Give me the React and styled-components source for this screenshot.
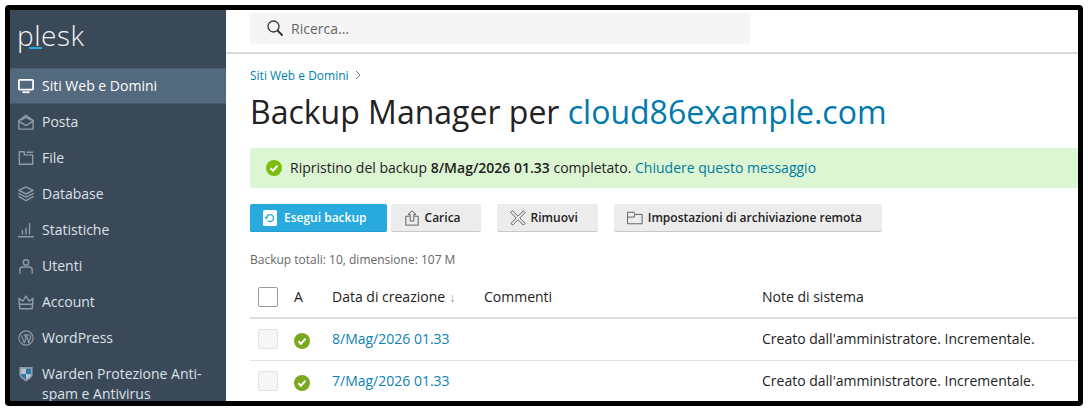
import React from 'react';
import styled, { createGlobalStyle } from 'styled-components';

const GlobalStyle = createGlobalStyle`
  html, body { margin: 0; padding: 0; background: #fff; }
  body { font-family: "Open Sans", "Liberation Sans", sans-serif; }
  * { box-sizing: border-box; }
`;

const Icon = ({ children, size = 18, color = 'currentColor', width = 1.6 }) => (
  <svg width={size} height={size} viewBox="0 0 18 18" fill="none" stroke={color} strokeWidth={width} strokeLinecap="round" strokeLinejoin="round">
    {children}
  </svg>
);

const navItems = [
  {
    label: 'Siti Web e Domini',
    active: true,
    icon: (
      <svg width="18" height="18" viewBox="0 0 18 18" fill="#fff">
        <path d="M2 1h14a2 2 0 0 1 2 2v9a2 2 0 0 1-2 2H2a2 2 0 0 1-2-2V3a2 2 0 0 1 2-2zM2 3v9h14V3z" fillRule="evenodd" />
        <rect x="5" y="15" width="8" height="2" />
      </svg>
    ),
  },
  {
    label: 'Posta',
    icon: (
      <Icon>
        <path d="M1 7.500 9 1.500l8 6V17H1z" />
        <path d="M1 8l8 5 8-5M4 6.500 9 3.500l5 3" />
      </Icon>
    ),
  },
  {
    label: 'File',
    icon: (
      <Icon>
        <path d="M1.500 2h5.500v3.500h9.500V16h-15z" />
        <path d="M10 2.500h6.500" />
      </Icon>
    ),
  },
  {
    label: 'Database',
    icon: (
      <Icon>
        <path d="M9 1 17 5l-8 4-8-4z" />
        <path d="M1 8.500 9 12.500l8-4M1 12l8 4.500 8-4.500" />
      </Icon>
    ),
  },
  {
    label: 'Statistiche',
    icon: (
      <Icon>
        <path d="M.5 16.500h17M5 13.500V9.500M9 13.500V7M13 13.500V2" />
      </Icon>
    ),
  },
  {
    label: 'Utenti',
    icon: (
      <Icon>
        <circle cx="9" cy="5" r="3" />
        <path d="M2 17v-3.500c0-2 1.500-3.300 3.500-3.300h7c2 0 3.500 1.300 3.500 3.300V17" />
      </Icon>
    ),
  },
  {
    label: 'Account',
    icon: (
      <Icon>
        <path d="M1 5 5.500 8 9 2.500 12.500 8 17 5l-1 11.500H2z" />
        <path d="M2 11.500h14" />
      </Icon>
    ),
  },
  {
    label: 'WordPress',
    icon: (
      <Icon width={1.3}>
        <circle cx="9" cy="9" r="8" />
        <path d="M4 6.500 7 14.500 9 9 7.500 5.500M7 5.500h4.500M9.500 5.500l2.500 9 2-5.500c.5-1.500 0-2.500-.8-3.500" />
      </Icon>
    ),
  },
  {
    label: 'Warden Protezione Anti-spam e Antivirus',
    icon: (
      <svg width="18" height="18" viewBox="0 0 18 18">
        <path d="M1.500 1h15v8c0 3.500-3.500 6-7.500 8.500-4-2.500-7.500-5-7.500-8.500z" fill="#8e9ba6" />
        <path d="M3.500 3H9v6H3.500z" fill="#b4c3cf" />
        <path d="M9 3h5.500v6H9zM3.500 9H9v6c-3-1.800-5.500-3.500-5.500-6z" fill="#2c76aa" />
        <path d="M9 9h5.500c0 2.500-2.500 4.200-5.500 6z" fill="#b4c3cf" />
      </svg>
    ),
  },
];

const rows = ['8/Mag/2026 01.33', '7/Mag/2026 01.33'];

const Frame = styled.div`
  margin: 5px;
  width: 1078px;
  height: 401px;
  border: 5px solid #000;
  border-radius: 4px;
  overflow: hidden;
  display: flex;
  background: #fff;
`;

const Sidebar = styled.aside`
  width: 216px;
  flex: none;
  background: #3a4958;
  color: #d9e0e6;
`;

const Logo = styled.div`
  position: relative;
  height: 58px;
  padding: 5px 0 0 7px;
  font-family: "Open Sans", sans-serif;
  font-weight: 300;
  font-size: 28px;
  line-height: 40px;
  letter-spacing: 0.5px;
  color: #f2f5f7;

  &::after {
    content: '';
    position: absolute;
    left: 19px;
    top: 37px;
    width: 13px;
    height: 2px;
    background: #28aade;
  }
`;

const Nav = styled.nav`
  display: flex;
  flex-direction: column;
`;

const NavItem = styled.a`
  display: flex;
  gap: 8px;
  align-items: ${(p) => (p.$multi ? 'flex-start' : 'center')};
  min-height: 36px;
  padding: ${(p) => (p.$multi ? '8px 16px 0 8px' : '0 16px 0 8px')};
  font-size: 14px;
  line-height: 20px;
  background: ${(p) => (p.$active ? '#53697d' : 'transparent')};
  color: ${(p) => (p.$active ? '#fff' : '#dbe2e8')};
  box-shadow: ${(p) => (p.$active ? 'inset 0 1px 0 #4a5e70, inset 0 -1px 0 #46596a' : 'none')};

  svg {
    flex: none;
    width: 16px;
    height: 16px;
    margin-top: ${(p) => (p.$multi ? '2px' : '0')};
    color: #8d9ca9;
  }
`;

const Main = styled.main`
  flex: 1;
  min-width: 0;
  display: flex;
  flex-direction: column;
`;

const Topbar = styled.header`
  height: 44px;
  flex: none;
  padding: 3px 0 0 24px;
  border-bottom: 2px solid #d9d9d9;
`;

const SearchBox = styled.div`
  width: 500px;
  height: 31px;
  display: flex;
  align-items: center;
  gap: 7px;
  padding-left: 16px;
  padding-bottom: 1px;
  background: #f5f5f5;
  border-radius: 4px;
  font-size: 14px;
  color: #666;

  svg {
    color: #333;
  }
`;

const Content = styled.div`
  padding: 12px 0 0 24px;
`;

const Breadcrumb = styled.div`
  display: flex;
  align-items: center;
  gap: 6px;
  height: 18px;
  font-size: 12px;
  color: #007fb2;

  svg {
    color: #777;
  }
`;

const Title = styled.h1`
  margin: 6px 0 0;
  font-size: 32px;
  line-height: 44px;
  font-weight: 400;
  color: #222;
  white-space: nowrap;
`;

const TitleLink = styled.a`
  color: #0079ac;
`;

const Alert = styled.div`
  margin-top: 14px;
  height: 40px;
  display: flex;
  align-items: center;
  gap: 8px;
  padding-left: 16px;
  padding-bottom: 1px;
  background: #dcf5d2;
  border-radius: 3px 0 0 3px;
  font-size: 14px;
  color: #222;
  white-space: pre;

  strong {
    font-weight: 600;
  }
`;

const AlertLink = styled.a`
  color: #007a9e;
`;

const Toolbar = styled.div`
  margin-top: 16px;
  display: flex;
`;

const Button = styled.button`
  height: 28px;
  margin: 0 ${(p) => (p.$primary ? '4px' : '16px')} 0 0;
  display: flex;
  align-items: center;
  gap: ${(p) => (p.$primary ? '7px' : '5px')};
  padding: 0 20px 0 13px;
  border: 0;
  border-radius: 2px;
  border-bottom: 1px solid ${(p) => (p.$primary ? '#259ccb' : '#c8c8c8')};
  background: ${(p) => (p.$primary ? '#28aade' : '#ececec')};
  color: ${(p) => (p.$primary ? '#fff' : '#222')};
  font-family: inherit;
  font-size: 12px;
  font-weight: 600;
  white-space: nowrap;

  svg {
    color: #555;
    flex: none;
  }
`;

const Summary = styled.div`
  margin-top: 19px;
  height: 18px;
  font-size: 12px;
  line-height: 18px;
  color: #666;
`;

const HeadRow = styled.div`
  margin-top: 9px;
  height: 41px;
  display: grid;
  grid-template-columns: 36px 38px 152px 278px 1fr;
  align-items: center;
  padding: 0 0 2px 8px;
  border-bottom: 2px solid #dcdcdc;
  font-size: 14px;
  color: #222;
`;

const Row = styled(HeadRow)`
  margin-top: 0;
  height: 42px;
  border-bottom: 1px solid #e2e2e2;
`;

const Check = styled.span`
  display: block;
  width: 20px;
  height: 20px;
  border-radius: 2px;
  border: 1px solid ${(p) => (p.$disabled ? '#e4e4e4' : '#9a9a9a')};
  background: ${(p) => (p.$disabled ? '#f6f6f6' : '#fff')};
`;

const DateLink = styled.a`
  color: #0b82b4;
`;

const SortArrow = styled.span`
  margin-left: 4px;
  font-size: 12px;
  color: #888;
`;

const StatusIcon = styled.span`
  display: block;
  height: 16px;
  margin-top: 4px;
`;

const Check16 = ({ fill }) => (
  <svg width="16" height="16" viewBox="0 0 16 16" style={{ display: 'block' }}>
    <circle cx="8" cy="8" r="8" fill={fill} />
    <path d="M4.500 8.200 7 10.700l4.500-5" fill="none" stroke="#fff" strokeWidth="2" />
  </svg>
);

export default function App() {
  return (
    <>
      <GlobalStyle />
      <Frame>
        <Sidebar>
          <Logo>plesk</Logo>
          <Nav>
            {navItems.map((item) => (
              <NavItem key={item.label} $active={item.active} $multi={item.label.length > 20}>
                {item.icon}
                <span>{item.label}</span>
              </NavItem>
            ))}
          </Nav>
        </Sidebar>
        <Main>
          <Topbar>
            <SearchBox>
              <Icon size={18} width={1.3}>
                <circle cx="7.500" cy="7.500" r="5.500" />
                <path d="M11.500 11.500 16 16" strokeWidth="1.800" />
              </Icon>
              Ricerca...
            </SearchBox>
          </Topbar>
          <Content>
            <Breadcrumb>
              Siti Web e Domini
              <svg width="6" height="10" viewBox="0 0 6 10" fill="none" stroke="currentColor">
                <path d="m1 1 4 4-4 4" />
              </svg>
            </Breadcrumb>
            <Title>
              Backup Manager per <TitleLink>cloud86example.com</TitleLink>
            </Title>
            <Alert>
              <Check16 fill="#7dbd12" />
              <span>
                Ripristino del backup <strong>8/Mag/2026 01.33</strong> completato. <AlertLink>Chiudere questo messaggio</AlertLink>
              </span>
            </Alert>
            <Toolbar>
              <Button $primary>
                <svg width="14" height="16" viewBox="0 0 14 16">
                  <rect width="14" height="16" rx="1.500" fill="#fff" />
                  <path d="M3.500 8a3.500 3.500 0 1 1 1.200 2.700" fill="none" stroke="#28aade" strokeWidth="1.300" />
                  <path d="M1.500 7h4L3.500 9.500z" fill="#28aade" />
                </svg>
                Esegui backup
              </Button>
              <Button>
                <Icon size={16} width={1}>
                  <path d="M6 7H2v10h14V7h-4" />
                  <path d="M7 12V5H4.500L9 1l4.500 4H11v7z" />
                </Icon>
                Carica
              </Button>
              <Button>
                <Icon size={16} width={1}>
                  <path d="M3 1 9 7l6-6 2 2-6 6 6 6-2 2-6-6-6 6-2-2 6-6-6-6z" />
                </Icon>
                Rimuovi
              </Button>
              <Button>
                <Icon size={16} width={1}>
                  <path d="M1 2.500h7l1 2.500h8v10.500H1zM1 8h7l1-3" />
                </Icon>
                Impostazioni di archiviazione remota
              </Button>
            </Toolbar>
            <Summary>Backup totali: 10, dimensione: 107 M</Summary>
            <HeadRow>
              <Check />
              <span>A</span>
              <span>
                Data di creazione<SortArrow>↓</SortArrow>
              </span>
              <span>Commenti</span>
              <span>Note di sistema</span>
            </HeadRow>
            {rows.map((date) => (
              <Row key={date}>
                <Check $disabled />
                <StatusIcon>
                  <Check16 fill="#7aa81e" />
                </StatusIcon>
                <DateLink>{date}</DateLink>
                <span />
                <span>Creato dall'amministratore. Incrementale.</span>
              </Row>
            ))}
          </Content>
        </Main>
      </Frame>
    </>
  );
}
